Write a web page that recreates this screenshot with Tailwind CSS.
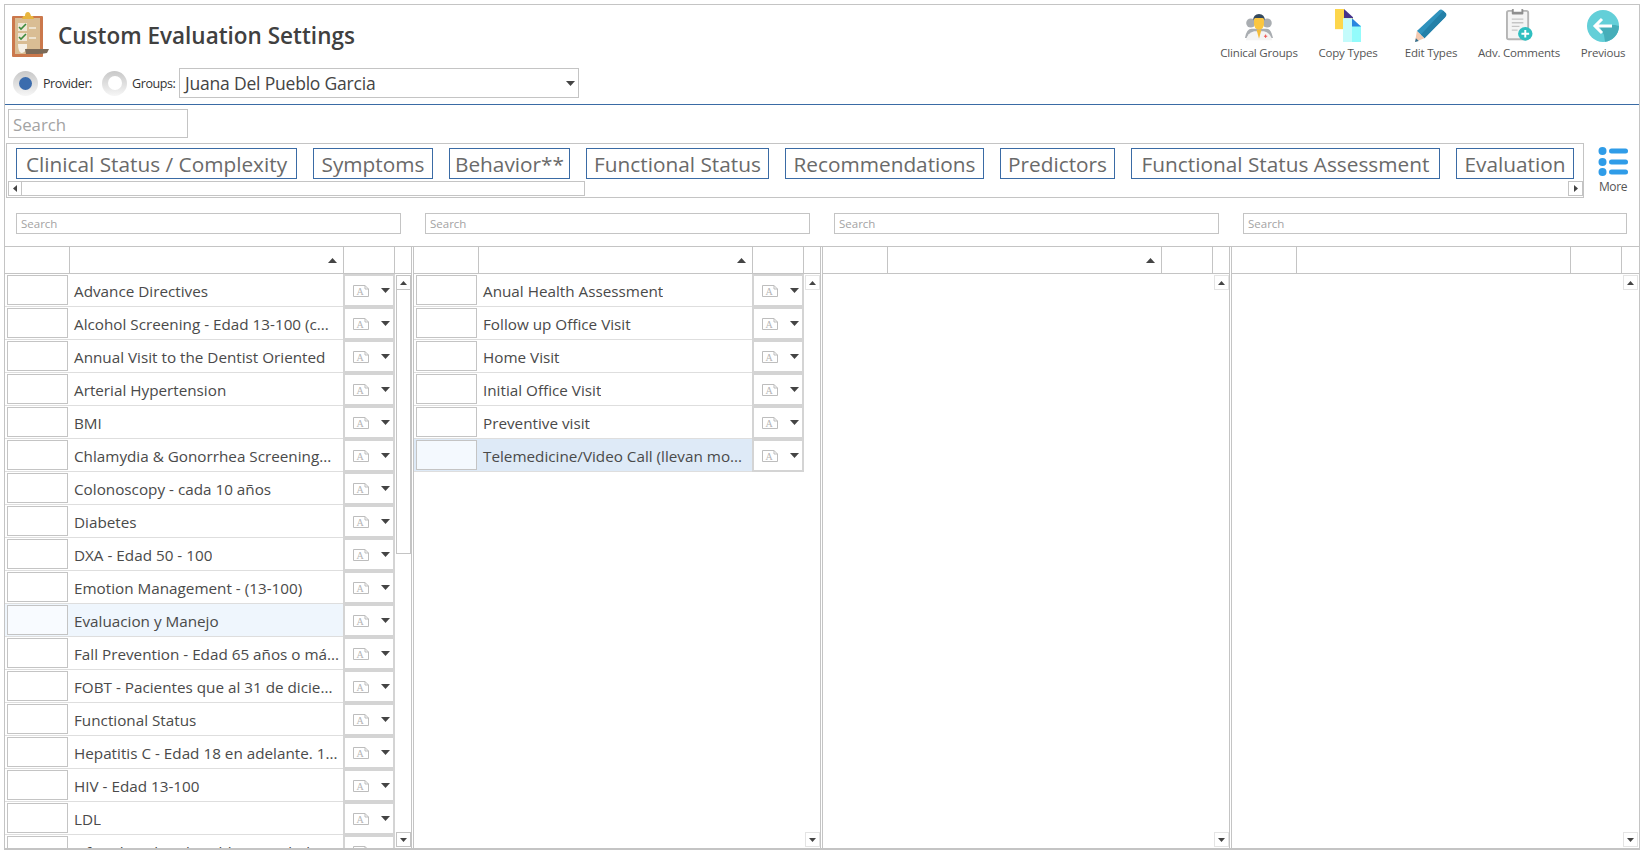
<!DOCTYPE html>
<html lang="en">
<head>
    <meta charset="UTF-8">
    <title>Custom Evaluation Settings</title>
    <script src="https://cdn.jsdelivr.net/npm/@tailwindcss/browser@4"></script>
</head>
<body class="bg-white overflow-hidden font-['Open_Sans',sans-serif] text-[#444]">
<div class="ml-[4px] mt-[4px] w-[1636px] h-[846px] border-t border-l border-r border-b-2 border-[#c4c4c4] flex flex-col overflow-hidden">

    <!-- Header -->
    <div class="h-[100px] shrink-0 border-b border-[#3a6ba5] flex justify-between">
        <div class="flex flex-col">
            <div class="h-[63px] flex pl-[7px] pt-[7px]">
                <svg width="37" height="45" viewBox="0 0 37 45">
                    <rect x="0" y="4" width="31" height="41" rx="1" fill="#cb784c"/>
                    <rect x="3" y="6" width="25" height="36" fill="#d9bd94"/>
                    <path d="M11 4 L13 4 Q13 0 16 0 Q18 0 19 4 L21 4 L22 7 L10 7Z" fill="#e8b53f"/>
                    <rect x="6" y="11" width="9" height="8" fill="#efe6d6"/>
                    <rect x="6" y="21" width="9" height="8" fill="#efe6d6"/>
                    <path d="M7 15 L9 17 L14 12" stroke="#3d8b3d" stroke-width="1.6" fill="none"/>
                    <path d="M7 25 L9 27 L14 22" stroke="#3d8b3d" stroke-width="1.6" fill="none"/>
                    <path d="M17 16 H24 M17 26 H24" stroke="#f4eee2" stroke-width="1.4"/>
                    <path d="M6 32 H15 V36 Q13 41 9 41 Q6 39 6 32Z" fill="#f5f0e6"/>
                    <path d="M13 37 H37 L35 41 Q30 42 26 42 H14Z" fill="#7b6a58"/>
                </svg>
                <h1 class="ml-[9px] mt-[8px] text-[22.5px] leading-[32px] font-semibold text-[#404040] whitespace-nowrap">Custom Evaluation Settings</h1>
            </div>
            <div class="h-[30px] flex items-center pl-[8px]">
                <div class="w-[25px] h-[25px] rounded-full bg-linear-to-b from-[#c8c8c8] to-[#f6f6f6] flex items-center justify-center">
                    <div class="w-[13px] h-[13px] rounded-full bg-[#3b6cad]"></div>
                </div>
                <span class="ml-[5px] pt-[3px] w-[59px] text-[12.5px] tracking-[-0.4px] text-[#333]">Provider:</span>
                <div class="w-[25px] h-[25px] rounded-full bg-linear-to-b from-[#c8c8c8] to-[#f6f6f6] flex items-center justify-center">
                    <div class="w-[14px] h-[14px] rounded-full bg-white"></div>
                </div>
                <span class="ml-[5px] pt-[3px] w-[47px] text-[12.5px] tracking-[-0.4px] text-[#333]">Groups:</span>
                <div class="w-[400px] h-[30px] border border-[#c4c4c4] flex items-center justify-between pl-[5px] pr-[3px]">
                    <span class="pt-[1px] text-[17.5px] text-[#444] tracking-[-0.2px]">Juana Del Pueblo Garcia</span>
                    <svg width="9" height="5" viewBox="0 0 9 5"><path d="M0 0H9L4.5 5Z" fill="#444"/></svg>
                </div>
            </div>
        </div>
        <div class="flex mr-[6px] pt-[4px] text-[11.5px] leading-[16px] tracking-[-0.2px] text-[#555] text-center">
            <div class="w-[80px] flex flex-col items-center">
                <svg width="32" height="33" viewBox="0 -5 34 40">
                    <circle cx="7" cy="12" r="5.5" fill="#a9adb1"/><circle cx="27" cy="12" r="5.5" fill="#a9adb1"/>
                    <path d="M0 30 Q2 19 8 19 H26 Q32 19 34 30Z" fill="#a9adb1"/>
                    <path d="M1 33 Q3 24 11 22 H23 Q31 24 33 33Z" fill="#f4f4f4"/>
                    <path d="M11 7 Q11 3 17 3 Q23 3 23 7 V13 Q23 20 17 20 Q11 20 11 13Z" fill="#fbc63f"/>
                    <path d="M10 9 Q10 1 17 1 Q24 1 24 9 L22 6 H12Z" fill="#34495e"/>
                    <path d="M14 20 H20 L17 31Z" fill="#f5bd3a"/>
                    <path d="M23 28 H27 M25 26 V30" stroke="#e55" stroke-width="1.2"/>
                </svg>
                <span class="mt-[3px] whitespace-nowrap">Clinical Groups</span>
            </div>
            <div class="w-[98px] flex flex-col items-center">
                <svg width="26" height="33" viewBox="0 0 26 36" preserveAspectRatio="none">
                    <rect x="0" y="0" width="9" height="22" fill="#fdd64b"/>
                    <path d="M9 0 L18 9 V10 H9Z" fill="#46338c"/>
                    <rect x="9" y="10" width="9" height="1.5" fill="#fdd64b"/>
                    <rect x="8" y="10" width="9" height="26" fill="#c4fbfb"/>
                    <rect x="17" y="18" width="9" height="18" fill="#93fbfb"/>
                    <path d="M17 10 L26 19 H17Z" fill="#2a86e0"/>
                </svg>
                <span class="mt-[3px] whitespace-nowrap">Copy Types</span>
            </div>
            <div class="w-[68px] flex flex-col items-center">
                <svg width="32" height="33" viewBox="0 0 34 36" preserveAspectRatio="none">
                    <path d="M26 1 Q28 0 30 2 L33 5 Q34 7 32 9 L10 32 L2 24Z" fill="#2f92bd"/>
                    <path d="M30 2 L33 5 Q34 7 32 9 L10 32 L6 28Z" fill="#2480a8"/>
                    <path d="M2 24 L10 32 L0 36Z" fill="#f3c9b0"/>
                    <path d="M1 32 L4 35 L0 36Z" fill="#2f6f90"/>
                </svg>
                <span class="mt-[3px] whitespace-nowrap">Edit Types</span>
            </div>
            <div class="w-[108px] flex flex-col items-center">
                <svg width="27" height="33" viewBox="0 0 28 36" preserveAspectRatio="none">
                    <rect x="1" y="2" width="22" height="31" rx="2" fill="#f4f4f4" stroke="#b5b5b5" stroke-width="2"/>
                    <rect x="6" y="0" width="12" height="6" rx="1" fill="#8f8f8f"/><rect x="8" y="0" width="8" height="3" fill="#fff"/>
                    <path d="M6 11 H18 M6 15 H18 M6 19 H14 M6 23 H12" stroke="#c5c5c5" stroke-width="1.4"/>
                    <circle cx="20" cy="27" r="7.5" fill="#2fbfc0"/>
                    <path d="M20 23 V31 M16 27 H24" stroke="#fff" stroke-width="2"/>
                </svg>
                <span class="mt-[3px] whitespace-nowrap">Adv. Comments</span>
            </div>
            <div class="w-[60px] flex flex-col items-center">
                <svg width="32" height="33" viewBox="0 0 32 33">
                    <circle cx="16" cy="17" r="16" fill="#63cfd8"/>
                    <path d="M18 32.8 A16 16 0 0 0 32 17 L28 16 H12 L17 26 Z" fill="#46aeb9"/>
                    <path d="M15 10 L8 17 L15 24 M8 17 H25" stroke="#fff" stroke-width="3" fill="none"/>
                </svg>
                <span class="mt-[3px] whitespace-nowrap">Previous</span>
            </div>
        </div>
    </div>

    <!-- Global search -->
    <div class="ml-[3px] mt-[4px] w-[180px] h-[29px] shrink-0 border border-[#c4c4c4] pl-[4px] text-[16.8px] leading-[29px] text-[#a3a3a3]">Search</div>

    <!-- Tabs -->
    <div class="flex mt-[5px] ml-[1px] shrink-0">
        <div class="w-[1578px] h-[55px] border border-[#c4c4c4] flex flex-col">
            <div class="flex gap-[16px] pl-[9px] pt-[4px] text-[20.8px] text-[#6a6a6a]">
                <div class="w-[281px] h-[31px] pt-[2px] border border-[#3a6ba5] flex items-center justify-center whitespace-nowrap">Clinical Status / Complexity</div>
                <div class="w-[120px] h-[31px] pt-[2px] border border-[#3a6ba5] flex items-center justify-center whitespace-nowrap">Symptoms</div>
                <div class="w-[121px] h-[31px] pt-[2px] border border-[#3a6ba5] flex items-center justify-center whitespace-nowrap">Behavior**</div>
                <div class="w-[183px] h-[31px] pt-[2px] border border-[#3a6ba5] flex items-center justify-center whitespace-nowrap">Functional Status</div>
                <div class="w-[199px] h-[31px] pt-[2px] border border-[#3a6ba5] flex items-center justify-center whitespace-nowrap">Recommendations</div>
                <div class="w-[115px] h-[31px] pt-[2px] border border-[#3a6ba5] flex items-center justify-center whitespace-nowrap">Predictors</div>
                <div class="w-[309px] h-[31px] pt-[2px] border border-[#3a6ba5] flex items-center justify-center whitespace-nowrap">Functional Status Assessment</div>
                <div class="w-[118px] h-[31px] pt-[2px] border border-[#3a6ba5] flex items-center justify-center whitespace-nowrap">Evaluation</div>
            </div>
            <div class="flex justify-between pl-[1px] pt-[2px]">
                <div class="w-[577px] h-[15px] border border-[#c4c4c4] flex">
                    <div class="w-[13px] border-r border-[#c4c4c4] flex items-center justify-center">
                        <svg width="4" height="7" viewBox="0 0 4 7"><path d="M4 0V7L0 3.5Z" fill="#444"/></svg>
                    </div>
                </div>
                <div class="w-[15px] h-[15px] border border-[#c4c4c4] flex items-center justify-center">
                    <svg width="4" height="7" viewBox="0 0 4 7"><path d="M0 0V7L4 3.5Z" fill="#444"/></svg>
                </div>
            </div>
        </div>
        <div class="ml-[14px] w-[30px] flex flex-col items-center pt-[4px]">
            <svg width="30" height="29" viewBox="0 0 30 29">
                <g fill="#2f9ce8">
                    <circle cx="4.5" cy="4" r="4"/><rect x="11" y="1.5" width="19" height="5" rx="2.5"/>
                    <circle cx="4.5" cy="15" r="4"/><rect x="11" y="12.5" width="19" height="5" rx="2.5"/>
                    <circle cx="4.5" cy="25" r="4"/><rect x="11" y="22.5" width="19" height="5" rx="2.5"/>
                </g>
            </svg>
            <span class="mt-[2px] text-[12px] leading-[18px] tracking-[-0.4px] text-[#555]">More</span>
        </div>
    </div>

    <!-- Column searches -->
    <div class="flex gap-[24px] ml-[11px] mt-[15px] shrink-0 text-[11.5px] text-[#a3a3a3]">
        <div class="w-[385px] h-[21px] border border-[#c4c4c4] pl-[4px] leading-[19px]">Search</div>
        <div class="w-[385px] h-[21px] border border-[#c4c4c4] pl-[4px] leading-[19px]">Search</div>
        <div class="w-[385px] h-[21px] border border-[#c4c4c4] pl-[4px] leading-[19px]">Search</div>
        <div class="w-[384px] h-[21px] border border-[#c4c4c4] pl-[4px] leading-[19px]">Search</div>
    </div>

    <!-- Panels -->
    <div id="panels" class="flex mt-[12px] flex-1 min-h-0 border-t border-[#c4c4c4]"></div>
</div>

<script>
    // Lists for the first two panels, the other two are empty
    const firstList = ['Advance Directives', 'Alcohol Screening - Edad 13-100 (c...', 'Annual Visit to the Dentist Oriented', 'Arterial Hypertension', 'BMI',
        'Chlamydia & Gonorrhea Screening...', 'Colonoscopy - cada 10 años', 'Diabetes', 'DXA - Edad 50 - 100', 'Emotion Management - (13-100)',
        'Evaluacion y Manejo', 'Fall Prevention - Edad 65 años o má...', 'FOBT - Pacientes que al 31 de dicie...', 'Functional Status',
        'Hepatitis C - Edad 18 en adelante. 1...', 'HIV - Edad 13-100', 'LDL', 'Lifestyle Related Problems - Edad +'];
    const secondList = ['Anual Health Assessment', 'Follow up Office Visit', 'Home Visit', 'Initial Office Visit', 'Preventive visit', 'Telemedicine/Video Call (llevan mo...'];

    const caretDown = '<svg width="9" height="5" viewBox="0 0 9 5"><path d="M0 0H9L4.5 5Z" fill="#444"/></svg>';
    const caretUp = '<svg width="9" height="5" viewBox="0 0 9 5"><path d="M0 5H9L4.5 0Z" fill="#444"/></svg>';
    const docIcon = '<svg width="16" height="12" viewBox="0 0 16 12"><path d="M.5.5H12L15.5 4V11.5H.5Z" fill="#fff" stroke="#bdbdbd"/><path d="M12 .5V4H15.5" fill="none" stroke="#bdbdbd"/><text x="7" y="9.5" font-size="10" font-family="Liberation Serif" fill="#b5b5b5" text-anchor="middle">A</text></svg>';

    function rowHtml(label, selected, rowSelected, boxSelected) {
        const rowBg = selected ? rowSelected : 'bg-white';
        const boxBg = selected ? boxSelected : 'bg-white';
        return `<div class="flex h-[33px] shrink-0 w-full">
            <div class="flex-1 min-w-0 flex items-center border-b border-[#dedede] ${rowBg}">
                <div class="w-[65px] shrink-0 pl-[2px]"><div class="w-[61px] h-[30px] border border-[#c4c4c4] ${boxBg}"></div></div>
                <div class="pl-[4px] pt-[2px] text-[15.25px] text-[#4a4a4a] whitespace-nowrap overflow-hidden">${label}</div>
            </div>
            <div class="w-[52px] shrink-0 border-2 border-[#d4d4d4] bg-white flex items-center justify-between pl-[8px] pr-[3px]">${docIcon}${caretDown}</div>
        </div>`;
    }

    function panelHtml(opts) {
        const rows = opts.items.map((label, i) => rowHtml(label, i === opts.selectedIndex, opts.rowSelected, opts.boxSelected)).join('');
        return `<div class="${opts.outerClass} flex flex-col h-full">
            <div class="flex h-[27px] shrink-0 border-b border-[#c4c4c4]">
                <div class="w-[65px] border-r border-[#c4c4c4]"></div>
                <div class="w-[274px] border-r border-[#c4c4c4] flex items-center justify-end pr-[6px]">${opts.sortCaret ? caretUp : ''}</div>
                <div class="w-[51px] border-r border-[#c4c4c4]"></div>
                <div class="flex-1"></div>
            </div>
            <div class="flex flex-1 min-h-0">
                <div class="w-[390px] shrink-0 flex flex-col overflow-hidden">${rows}</div>
                <div class="flex-1 flex flex-col justify-between pl-[1px] pt-[1px] pb-[1px] h-full">
                    <div class="flex flex-col">
                        <div class="w-[15px] h-[15px] border ${opts.btnBorder} flex items-center justify-center">${caretUp.replace('width="9"', 'width="7"').replace('height="5"', 'height="4"')}</div>
                        ${opts.thumb ? '<div class="w-[15px] h-[264px] border border-t-0 border-[#c4c4c4]"></div>' : ''}
                    </div>
                    <div class="w-[15px] h-[15px] border ${opts.btnBorder} flex items-center justify-center">${caretDown.replace('width="9"', 'width="7"').replace('height="5"', 'height="4"')}</div>
                </div>
            </div>
        </div>`;
    }

    document.getElementById('panels').innerHTML =
        panelHtml({ items: firstList, selectedIndex: 10, rowSelected: 'bg-[#eff6fd]', boxSelected: 'bg-[#f8fbff]', sortCaret: true, thumb: true, btnBorder: 'border-[#c4c4c4]',
            outerClass: 'w-[406px] box-content border-r border-[#c4c4c4] mr-[1px]' }) +
        panelHtml({ items: secondList, selectedIndex: 5, rowSelected: 'bg-[#deeaf7]', boxSelected: 'bg-[#f4f9fe]', sortCaret: true, thumb: false, btnBorder: 'border-[#e4e4e4]',
            outerClass: 'w-[406px] box-content border-l border-r border-[#c4c4c4] mr-[1px]' }) +
        panelHtml({ items: [], selectedIndex: -1, sortCaret: true, thumb: false, btnBorder: 'border-[#e4e4e4]',
            outerClass: 'w-[406px] box-content border-l border-r border-[#c4c4c4] mr-[1px]' }) +
        panelHtml({ items: [], selectedIndex: -1, sortCaret: false, thumb: false, btnBorder: 'border-[#e4e4e4]',
            outerClass: 'flex-1 border-l border-[#c4c4c4]' });
</script>
</body>
</html>
